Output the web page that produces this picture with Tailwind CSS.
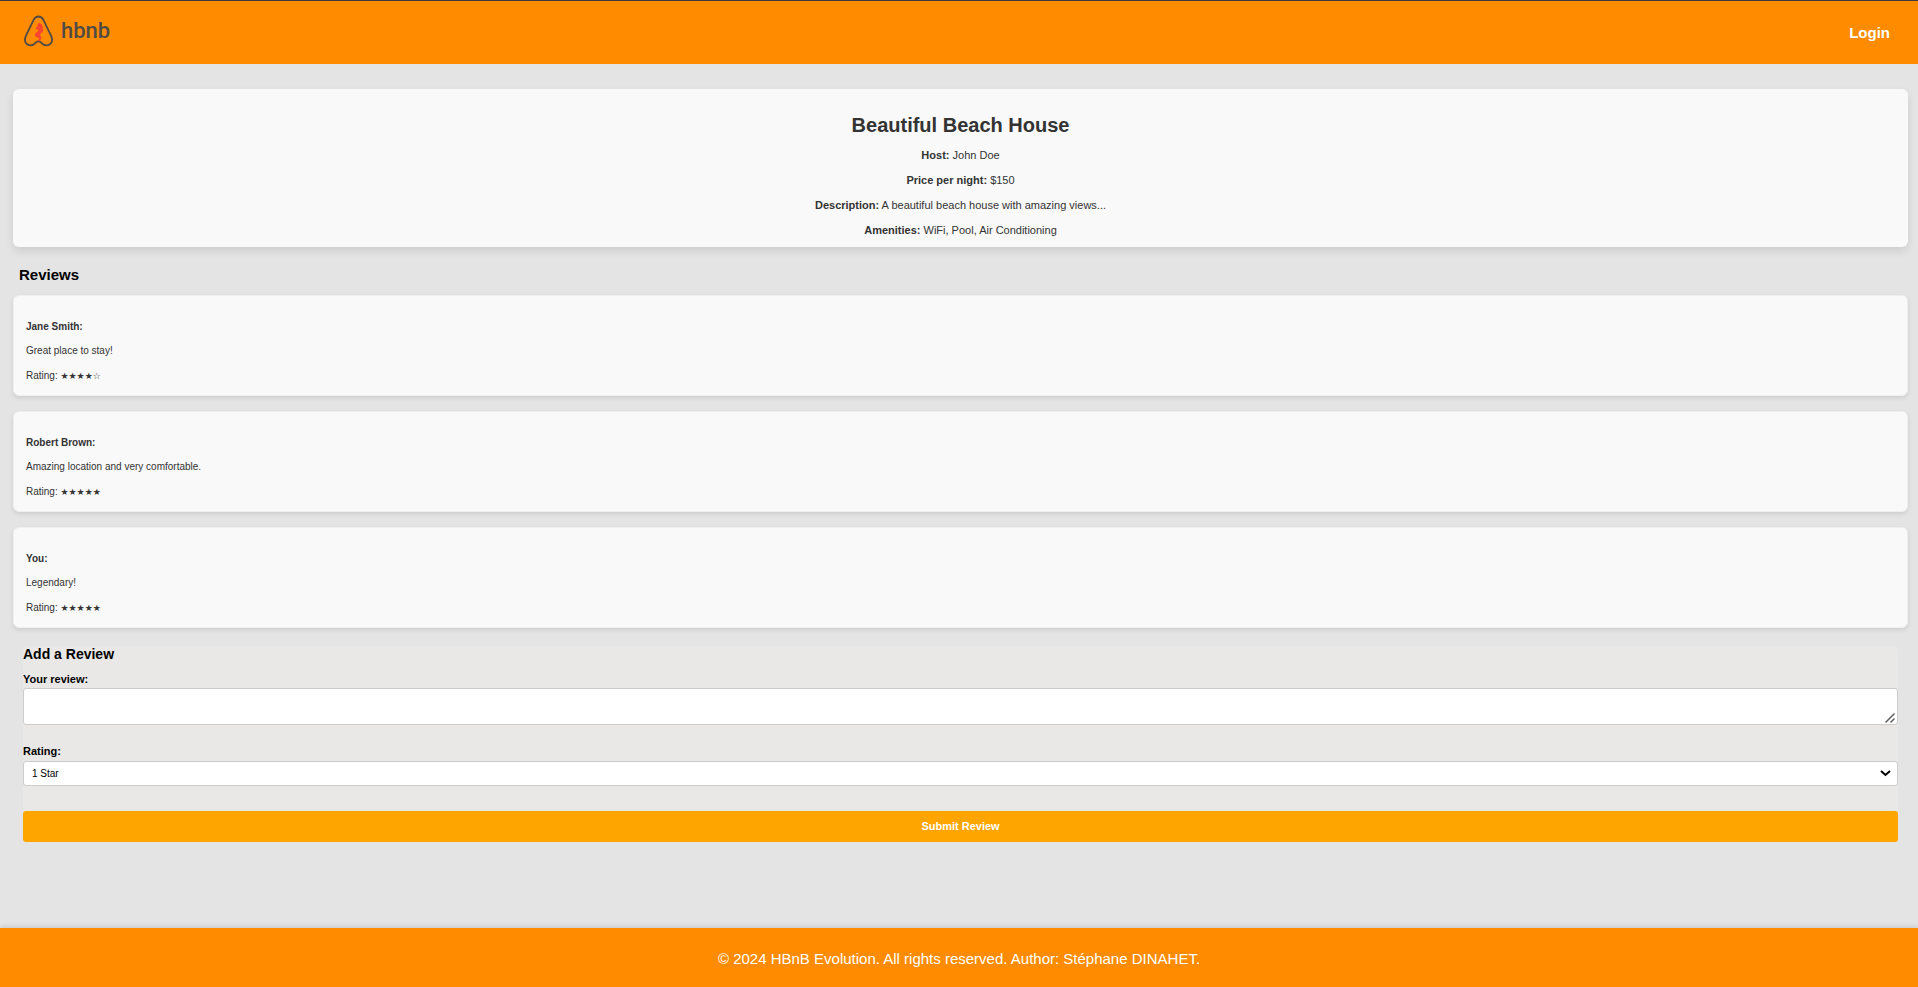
<!DOCTYPE html>
<html lang="en">
<head>
<meta charset="utf-8">
<meta name="viewport" content="width=device-width, initial-scale=1">
<title>HBnB - Place details</title>
<script src="https://cdn.jsdelivr.net/npm/@tailwindcss/browser@4"></script>
</head>
<body class="flex min-h-screen flex-col bg-[#e4e4e4] font-['Liberation_Sans',Arial,sans-serif] text-black">
<header class="flex h-16 items-center justify-between border-t border-[#3c3c3c] bg-[#ff8c00] pr-7 pl-6">
  <a href="#" class="flex items-center gap-2 pb-[3px] text-[#524b45]" aria-label="hbnb home">
    <svg class="h-8 w-[29px]" viewBox="0 0 29 32" fill="none">
      <path d="M14.500 1.500C12.300 1.500 10.700 2.700 9.600 4.900L2 20.600C.3 24.400 .8 27.600 3.200 29.300C5.800 31.100 8.300 30.600 10.600 28.700L12.400 27.100C13.800 25.900 15.200 25.900 16.600 27.100L18.400 28.700C20.700 30.600 23.200 31.100 25.800 29.300C28.200 27.600 28.700 24.400 27 20.600L19.400 4.900C18.300 2.700 16.700 1.500 14.500 1.500Z" stroke="currentColor" stroke-width="1.800"/>
      <path d="M15.200 7.500L16.500 9L17.700 8.900L18.300 11L19.400 11.900L18.200 13.300L19.200 14.600L19 16.500L17.800 17.600L16.600 18.800L16 20L17 21.500L17.200 23.600L16.200 25.500L14.500 26.500L13.500 25.300L15 24.500L15.100 23.200L13.600 22.400L11.400 21.500L10.800 19.700L11.500 18L13.400 16.700L14.800 15.600L13.900 14.400L11.800 14.300L11.600 12.900L13.300 11.700L13.500 9.500Z" fill="#f9452f"/>
    </svg>
    <span class="font-['Roboto',sans-serif] text-[22px] leading-8 font-medium">hbnb</span>
  </a>
  <nav><a href="#" class="text-[15px] leading-5 font-bold text-white">Login</a></nav>
</header>

<main class="flex flex-1 flex-col pt-[25px] pr-[10px] pb-10 pl-[13px]">
  <section class="flex flex-col items-center gap-[11px] rounded-md bg-[#f9f9f9] px-3 pt-6 pb-[10px] text-center text-[11px] leading-[14px] text-[#333] shadow-[0_4px_8px_rgba(0,0,0,0.1)]">
    <h1 class="text-[20px] leading-6 font-bold">Beautiful Beach House</h1>
    <p><strong>Host:</strong> John Doe</p>
    <p><strong>Price per night:</strong> $150</p>
    <p><strong>Description:</strong> A beautiful beach house with amazing views...</p>
    <p><strong>Amenities:</strong> WiFi, Pool, Air Conditioning</p>
  </section>

  <section class="pt-[18px]">
    <h2 class="pl-[6px] text-[15px] leading-5 font-bold">Reviews</h2>
    <div class="mt-[10px] flex flex-col gap-[15px] text-[10px] leading-[14px] text-[#333]">
      <article class="flex flex-col gap-[10px] rounded-md border border-[#efefef] bg-[#f9f9f9] px-3 pt-6 pb-3 shadow-[0_2px_4px_rgba(0,0,0,0.1)]">
        <p><strong>Jane Smith:</strong></p>
        <p>Great place to stay!</p>
        <p class="pt-px">Rating: <span class="font-['DejaVu_Sans',sans-serif] text-[9px]">★★★★☆</span></p>
      </article>
      <article class="flex flex-col gap-[10px] rounded-md border border-[#efefef] bg-[#f9f9f9] px-3 pt-6 pb-3 shadow-[0_2px_4px_rgba(0,0,0,0.1)]">
        <p><strong>Robert Brown:</strong></p>
        <p>Amazing location and very comfortable.</p>
        <p class="pt-px">Rating: <span class="font-['DejaVu_Sans',sans-serif] text-[9px]">★★★★★</span></p>
      </article>
      <article class="flex flex-col gap-[10px] rounded-md border border-[#efefef] bg-[#f9f9f9] px-3 pt-6 pb-3 shadow-[0_2px_4px_rgba(0,0,0,0.1)]">
        <p><strong>You:</strong></p>
        <p>Legendary!</p>
        <p class="pt-px">Rating: <span class="font-['DejaVu_Sans',sans-serif] text-[9px]">★★★★★</span></p>
      </article>
    </div>
  </section>

  <form class="mt-[18px] mr-[10px] ml-[10px] flex flex-col rounded bg-[#e9e8e6] text-[11px] leading-[14px]">
    <h2 class="text-[14px] leading-4 font-bold">Add a Review</h2>
    <label for="review" class="mt-[10px] font-bold">Your review:</label>
    <div class="relative mt-[2px]">
      <textarea id="review" rows="1" class="block h-[37px] w-full resize-none rounded-[3px] border border-[#ccc] bg-white p-2 text-[10px]"></textarea>
      <svg class="pointer-events-none absolute right-[3px] bottom-[2px] h-[10px] w-[10px]" viewBox="0 0 10 10" fill="none"><path d="M.5 9.500l9-9M5.500 9.500l4-4" stroke="#5f5f5f" stroke-width="1.500"/></svg>
    </div>
    <label for="rating" class="mt-[19px] font-bold">Rating:</label>
    <div class="relative mt-[3px]">
      <select id="rating" class="block h-[25px] w-full appearance-none rounded-[3px] border border-[#ccc] bg-white px-2 text-[10px] leading-[14px]">
        <option>1 Star</option>
        <option>2 Stars</option>
        <option>3 Stars</option>
        <option>4 Stars</option>
        <option>5 Stars</option>
      </select>
      <svg class="pointer-events-none absolute top-[9px] right-[7px] h-[7px] w-[11px]" viewBox="0 0 11 7" fill="none"><path d="M1 1l4.500 4L10 1" stroke="#000" stroke-width="2"/></svg>
    </div>
    <button type="submit" class="mt-[25px] h-[31px] w-full rounded-[3px] bg-[#ffa500] pb-px text-[11px] font-bold text-white">Submit Review</button>
  </form>
</main>

<footer class="flex h-[59px] items-center justify-center bg-[#ff8c00] pt-[2px] text-[15px] leading-5 text-white shadow-[0_-2px_4px_rgba(0,0,0,0.1)]">
  <p>© 2024 HBnB Evolution. All rights reserved. Author: Stéphane DINAHET.</p>
</footer>
</body>
</html>
